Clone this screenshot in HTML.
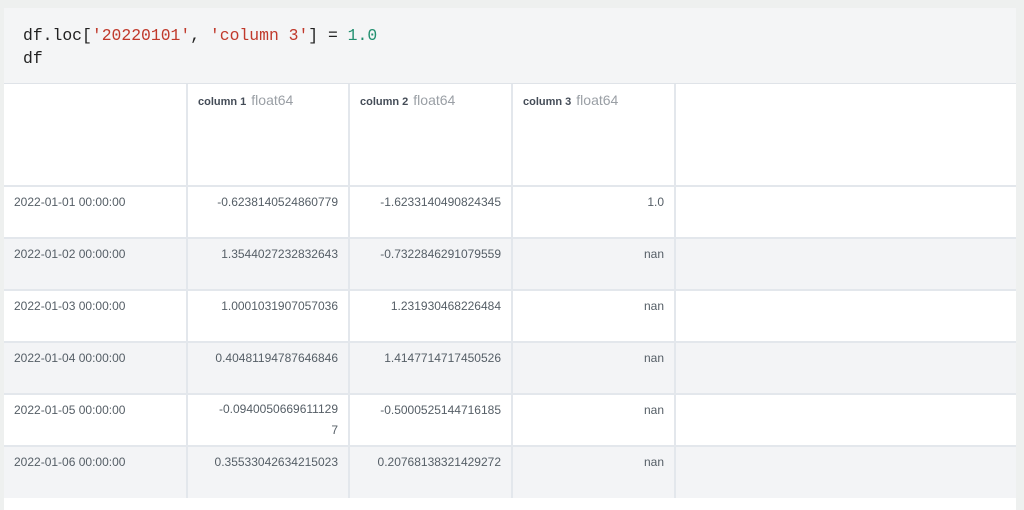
<!DOCTYPE html>
<html><head><style>
body{margin:0;width:1024px;height:510px;background:#eef0ef;font-family:"Liberation Sans",sans-serif;overflow:hidden;position:relative}
.card{position:absolute;left:4px;top:8px;width:1012px;height:502px;background:#fff}
.code{height:76px;background:#f4f5f6;border-bottom:1px solid #dfe3e8;box-sizing:border-box;padding:16px 0 0 19px;font-family:"Liberation Mono",monospace;font-size:16.4px;line-height:23px;color:#222}
.s{color:#c0392b}.n{color:#229070}
table{border-collapse:collapse;table-layout:fixed;width:1012px}
td{border-right:2px solid #e3e7ec;border-bottom:2px solid #e3e7ec;vertical-align:top;padding:8px 10px 0 10px;font-size:12px;line-height:14px;color:#555e66;box-sizing:border-box}
td.r{text-align:right}
tr.h td{height:102px;border-bottom:2px solid #e3e7ec;padding-top:9px;color:#333b45}
tr.h b{font-weight:bold;font-size:11px;color:#444c57}
tr.h span{color:#9a9fa5;font-size:14px;margin-left:5px}
tr.g td{background:#f3f4f6}
tr td:last-child{border-right:none}
tr td{height:52px}
</style></head><body>
<div class="card">
<div class="code">df.loc[<span class="s">'20220101'</span>, <span class="s">'column 3'</span>] = <span class="n">1.0</span><br>df</div>
<table>
<colgroup><col style="width:183px"><col style="width:162px"><col style="width:163px"><col style="width:163px"><col></colgroup>
<tr class="h"><td></td><td><b>column 1</b><span>float64</span></td><td><b>column 2</b><span>float64</span></td><td><b>column 3</b><span>float64</span></td><td></td></tr>
<tr><td>2022-01-01 00:00:00</td><td class="r">-0.6238140524860779</td><td class="r">-1.6233140490824345</td><td class="r">1.0</td><td></td></tr>
<tr class="g"><td>2022-01-02 00:00:00</td><td class="r">1.3544027232832643</td><td class="r">-0.7322846291079559</td><td class="r">nan</td><td></td></tr>
<tr><td>2022-01-03 00:00:00</td><td class="r">1.0001031907057036</td><td class="r">1.231930468226484</td><td class="r">nan</td><td></td></tr>
<tr class="g"><td>2022-01-04 00:00:00</td><td class="r">0.40481194787646846</td><td class="r">1.4147714717450526</td><td class="r">nan</td><td></td></tr>
<tr><td>2022-01-05 00:00:00</td><td class="r" style="line-height:21px;padding-top:4px">-0.0940050669611129<br>7</td><td class="r">-0.5000525144716185</td><td class="r">nan</td><td></td></tr>
<tr class="g"><td style="border-bottom:none">2022-01-06 00:00:00</td><td class="r" style="border-bottom:none">0.35533042634215023</td><td class="r" style="border-bottom:none">0.20768138321429272</td><td class="r" style="border-bottom:none">nan</td><td style="border-bottom:none"></td></tr>
</table>
</div>
</body></html>
